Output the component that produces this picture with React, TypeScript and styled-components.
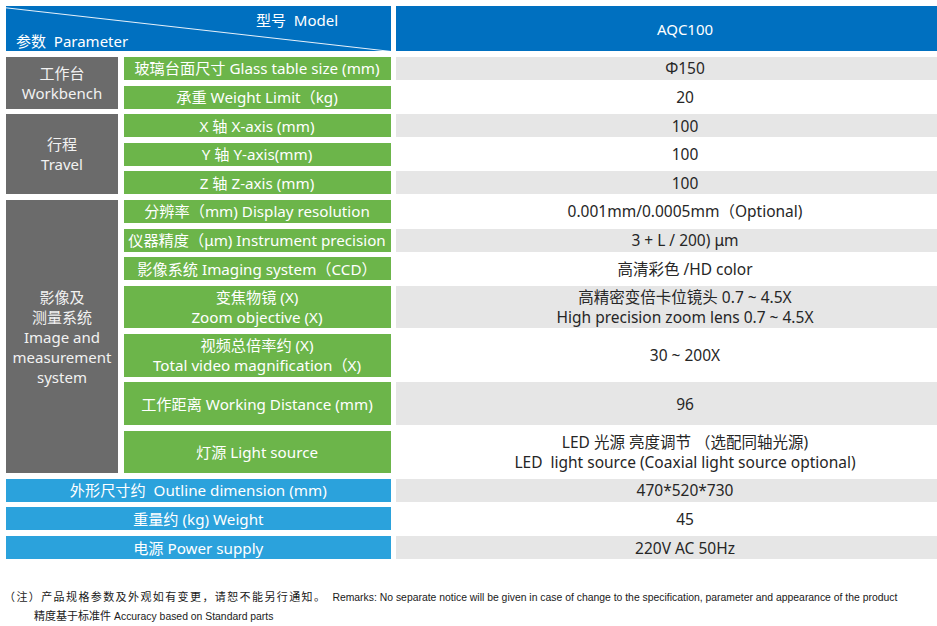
import { FC } from "react";
import styled, { createGlobalStyle } from "styled-components";

const GlobalStyle = createGlobalStyle`
  html, body {
    margin: 0;
    padding: 0;
    background: #fff;
  }
  body {
    font-family: "Noto Sans", "Noto Sans CJK SC", sans-serif;
  }
`;

const Page = styled.main`
  width: 937px;
  height: 626px;
  padding: 6px 0 0 6px;
  box-sizing: border-box;
  overflow: hidden;
`;

// value column runs past the right edge of the page in the original
const SpecGrid = styled.section`
  display: grid;
  grid-template-columns: 112px 267px 578px;
  grid-template-rows: 45.4px repeat(8, 23px) repeat(4, 42.7px) repeat(3, 23px);
  column-gap: 5.5px;
  row-gap: 5.6px;
`;

const HeaderCorner = styled.div`
  grid-column: 1 / span 2;
  position: relative;
  background: #0070c0;
  color: #fff;
  font-size: 15px;
`;

const Diagonal = styled.svg`
  position: absolute;
  inset: 0;
  width: 100%;
  height: 100%;
`;

const ModelText = styled.span`
  position: absolute;
  top: 3px;
  left: 250px;
`;

const ParamText = styled.span`
  position: absolute;
  left: 10px;
  bottom: 0;
`;

const ModelCell = styled.div`
  grid-column: 3;
  background: #0070c0;
  color: #fff;
  font-size: 15px;
  display: flex;
  align-items: center;
  justify-content: center;
`;

const GroupCell = styled.div<{ $rows: number }>`
  grid-column: 1;
  grid-row: span ${(p) => p.$rows};
  background: #6b6b6b;
  color: #f2f2f2;
  font-size: 15px;
  line-height: 20px;
  display: flex;
  align-items: center;
  justify-content: center;
  text-align: center;
`;

const LabelCell = styled.div<{ $tone: "green" | "blue" }>`
  grid-column: ${(p) => (p.$tone === "blue" ? "1 / span 2" : "2")};
  background: ${(p) => (p.$tone === "blue" ? "#2ba2dc" : "#6cb54a")};
  color: #fff;
  font-size: 15.2px;
  line-height: 20px;
  display: flex;
  align-items: center;
  justify-content: center;
  text-align: center;
  white-space: pre;
`;

const ValueCell = styled.div<{ $shaded: boolean }>`
  grid-column: 3;
  background: ${(p) => (p.$shaded ? "#e6e6e6" : "#fff")};
  color: #262626;
  font-size: 15.5px;
  line-height: 20px;
  display: flex;
  align-items: center;
  justify-content: center;
  text-align: center;
  white-space: pre;
`;

const Notes = styled.footer`
  margin-top: 29px;
  margin-left: -2px;
  color: #1a1a1a;
`;

const NoteLine = styled.div<{ $indent?: boolean }>`
  display: flex;
  align-items: baseline;
  height: 19px;
  padding-left: ${(p) => (p.$indent ? "30px" : "0")};
`;

const NoteCn = styled.span<{ $spaced?: boolean }>`
  font-family: "Noto Sans CJK SC", sans-serif;
  font-size: 11px;
  letter-spacing: ${(p) => (p.$spaced ? "1.4px" : "0")};
`;

const NoteEn = styled.span<{ $gap: number }>`
  font-family: "Liberation Sans Narrow", "Liberation Sans", sans-serif;
  font-size: 10.4px;
  margin-left: ${(p) => p.$gap}px;
`;

type Row = { label: string; value: string[] };
type Group = { title: string[]; rows: Row[] };

const groups: Group[] = [
  {
    title: ["工作台", "Workbench"],
    rows: [
      { label: "玻璃台面尺寸 Glass table size (mm)", value: ["Φ150"] },
      { label: "承重 Weight Limit（kg)", value: ["20"] },
    ],
  },
  {
    title: ["行程", "Travel"],
    rows: [
      { label: "X 轴 X-axis (mm)", value: ["100"] },
      { label: "Y 轴 Y-axis(mm)", value: ["100"] },
      { label: "Z 轴 Z-axis (mm)", value: ["100"] },
    ],
  },
  {
    title: ["影像及", "测量系统", "Image and", "measurement", "system"],
    rows: [
      { label: "分辨率（mm) Display resolution", value: ["0.001mm/0.0005mm（Optional)"] },
      { label: "仪器精度（μm) Instrument precision", value: ["3 + L / 200) μm"] },
      { label: "影像系统 Imaging system（CCD）", value: ["高清彩色 /HD color"] },
      {
        label: "变焦物镜 (X)\nZoom objective (X)",
        value: ["高精密变倍卡位镜头 0.7 ~ 4.5X", "High precision zoom lens 0.7 ~ 4.5X"],
      },
      { label: "视频总倍率约 (X)\nTotal video magnification（X)", value: ["30 ~ 200X"] },
      { label: "工作距离 Working Distance (mm)", value: ["96"] },
      {
        label: "灯源 Light source",
        value: ["LED 光源 亮度调节 （选配同轴光源)", "LED  light source (Coaxial light source optional)"],
      },
    ],
  },
];

const extras: Row[] = [
  { label: "外形尺寸约  Outline dimension (mm)", value: ["470*520*730"] },
  { label: "重量约 (kg) Weight", value: ["45"] },
  { label: "电源 Power supply", value: ["220V AC 50Hz"] },
];

const Lines: FC<{ lines: string[] }> = ({ lines }) => (
  <span>
    {lines.map((l, i) => (
      <span key={i}>
        {i > 0 && <br />}
        {l}
      </span>
    ))}
  </span>
);

export default function App() {
  let rowIndex = 0;
  return (
    <>
      <GlobalStyle />
      <Page>
        <SpecGrid>
          <HeaderCorner>
            <Diagonal viewBox="0 0 100 100" preserveAspectRatio="none">
              <line
                x1="0"
                y1="4"
                x2="100"
                y2="100"
                stroke="#e8f2fb"
                strokeWidth="1"
                vectorEffect="non-scaling-stroke"
              />
            </Diagonal>
            <ModelText>型号&nbsp; Model</ModelText>
            <ParamText>参数&nbsp; Parameter</ParamText>
          </HeaderCorner>
          <ModelCell>AQC100</ModelCell>

          {groups.map((g) => [
            <GroupCell key={g.title[0]} $rows={g.rows.length}>
              <Lines lines={g.title} />
            </GroupCell>,
            ...g.rows.flatMap((r) => {
              const shaded = rowIndex++ % 2 === 0;
              return [
                <LabelCell key={r.label} $tone="green">
                  <Lines lines={r.label.split("\n")} />
                </LabelCell>,
                <ValueCell key={r.label + "-v"} $shaded={shaded}>
                  <Lines lines={r.value} />
                </ValueCell>,
              ];
            }),
          ])}

          {extras.flatMap((r) => {
            const shaded = rowIndex++ % 2 === 0;
            return [
              <LabelCell key={r.label} $tone="blue">
                {r.label}
              </LabelCell>,
              <ValueCell key={r.label + "-v"} $shaded={shaded}>
                <Lines lines={r.value} />
              </ValueCell>,
            ];
          })}
        </SpecGrid>

        <Notes>
          <NoteLine>
            <NoteCn $spaced>（注）产品规格参数及外观如有变更，请恕不能另行通知。</NoteCn>
            <NoteEn $gap={6}>
              Remarks: No separate notice will be given in case of change to the specification,
              parameter and appearance of the product
            </NoteEn>
          </NoteLine>
          <NoteLine $indent>
            <NoteCn>精度基于标准件</NoteCn>
            <NoteEn $gap={3}>Accuracy based on Standard parts</NoteEn>
          </NoteLine>
        </Notes>
      </Page>
    </>
  );
}
